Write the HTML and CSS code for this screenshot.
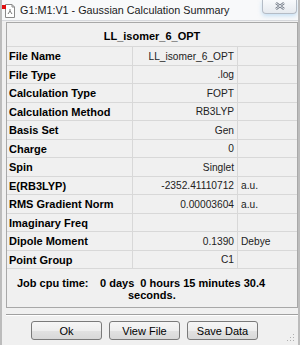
FILE: index.html
```html
<!DOCTYPE html>
<html lang="en">
<head>
    <meta charset="UTF-8">
    <meta name="viewport" content="width=device-width, initial-scale=1.0">
    <title>G1:M1:V1 - Gaussian Calculation Summary</title>
    <link rel="stylesheet" href="styles.css">
</head>
<body>
    <div class="window">
        <div class="titlebar">
            <svg class="app-icon" width="14" height="16" viewBox="0 0 14 16">
                <path d="M3.5 1.5 H10 L12.5 4 V14.5 H3.5 Z" fill="#fff" stroke="#8a8a8a"/>
                <path d="M10 1.5 V4 H12.5" fill="none" stroke="#8a8a8a"/>
                <path d="M6 11 L8 8 L10 11 M8 8 V6" fill="none" stroke="#777" stroke-width="1"/>
                <rect x="0" y="2" width="4" height="4" fill="#e01010"/>
            </svg>
            <span class="title">G1:M1:V1 - Gaussian Calculation Summary</span>
            <div class="close">
                <svg width="12" height="8" viewBox="0 0 12 8">
                    <path d="M2 1 L10 7 M10 1 L2 7" stroke="#6f7782" stroke-width="2.4"/>
                    <path d="M2 1 L10 7 M10 1 L2 7" stroke="#e9edf2" stroke-width="1"/>
                </svg>
            </div>
        </div>

        <div class="client">
            <div class="summary">
                <div class="grid">
                    <div class="head">LL_isomer_6_OPT</div>

                    <div class="label">File Name</div><div class="value">LL_isomer_6_OPT</div><div class="unit"></div>
                    <div class="label">File Type</div><div class="value">.log</div><div class="unit"></div>
                    <div class="label">Calculation Type</div><div class="value">FOPT</div><div class="unit"></div>
                    <div class="label">Calculation Method</div><div class="value">RB3LYP</div><div class="unit"></div>
                    <div class="label">Basis Set</div><div class="value">Gen</div><div class="unit"></div>
                    <div class="label">Charge</div><div class="value">0</div><div class="unit"></div>
                    <div class="label">Spin</div><div class="value">Singlet</div><div class="unit"></div>
                    <div class="label">E(RB3LYP)</div><div class="value">-2352.41110712</div><div class="unit">a.u.</div>
                    <div class="label">RMS Gradient Norm</div><div class="value">0.00003604</div><div class="unit">a.u.</div>
                    <div class="label">Imaginary Freq</div><div class="value"></div><div class="unit"></div>
                    <div class="label">Dipole Moment</div><div class="value">0.1390</div><div class="unit">Debye</div>
                    <div class="label">Point Group</div><div class="value">C1</div><div class="unit"></div>
                </div>

                <div class="cpu">
                    <span class="cpu-label">Job cpu time:</span>
                    <div class="cpu-value">
                        <span class="line">0 days &nbsp;0 hours 15 minutes 30.4</span>
                        <span class="line second">seconds.</span>
                    </div>
                </div>
            </div>

            <div class="separator"></div>

            <div class="buttons">
                <button>Ok</button>
                <button>View File</button>
                <button>Save Data</button>
            </div>
        </div>

        <div class="grip">
            <svg width="8" height="8" viewBox="0 0 8 8">
                <rect x="6" y="0" width="1" height="1" fill="#b0b0b0"/>
                <rect x="3" y="3" width="1" height="1" fill="#b0b0b0"/>
                <rect x="6" y="3" width="1" height="1" fill="#b0b0b0"/>
                <rect x="0" y="6" width="1" height="1" fill="#b0b0b0"/>
                <rect x="3" y="6" width="1" height="1" fill="#b0b0b0"/>
                <rect x="6" y="6" width="1" height="1" fill="#b0b0b0"/>
            </svg>
        </div>
    </div>
</body>
</html>
```

FILE: styles.css
```css
body {
    margin: 0;
    font-family: "Liberation Sans", Arial, sans-serif;
    background: #ffffff;
}
.window {
    position: relative;
    width: 300px;
    height: 345px;
    box-sizing: border-box;
    background: #f0f0f0;
    border-left: 2px solid #bcbcbc;
    border-right: 2px solid #bcbcbc;
    overflow: hidden;
}
.titlebar {
    display: flex;
    align-items: center;
    height: 21px;
    margin: 0 -2px;
    padding-left: 2px;
    background: #f8f9fa;
    border-bottom: 1px solid #d6d8dc;
    box-sizing: border-box;
}
.app-icon {
    margin-top: 2px;
    flex: none;
}
.title {
    margin-left: 4px;
    font-size: 10.8px;
    color: #1a1a1a;
    white-space: nowrap;
}
.close {
    position: absolute;
    top: 0;
    right: 1px;
    width: 35px;
    height: 14px;
    box-sizing: border-box;
    border: 1px solid #b4bcc6;
    border-top: none;
    border-radius: 0 0 4px 4px;
    background: linear-gradient(#f8fafc, #e6eaef);
    box-shadow: 0 2px 4px rgba(150, 200, 240, 0.5);
    display: flex;
    justify-content: center;
    padding-top: 2px;
}
.client {
    padding: 1px 1px 0 4px;
}
.summary {
    width: 292px;
    box-sizing: border-box;
    border: 1px solid #a8a8a8;
}
.grid {
    display: grid;
    grid-template-columns: 126px 105px 1fr;
    grid-template-rows: 24px repeat(12, 18.5px);
}
.grid > div {
    box-sizing: border-box;
    border-bottom: 1px solid #d8d8d8;
    display: flex;
    align-items: center;
    white-space: nowrap;
}
.head {
    grid-column: 1 / 4;
    justify-content: center;
    padding-top: 3px;
    font-weight: bold;
    font-size: 11px;
    color: #000;
}
.label {
    padding: 1px 0 0 2px;
    font-weight: bold;
    font-size: 11px;
    color: #000;
    border-right: 1px solid #d8d8d8;
}
.value {
    justify-content: flex-end;
    padding: 1px 3px 0 0;
    font-size: 10.2px;
    color: #222;
    border-right: 1px solid #d8d8d8;
}
.unit {
    padding: 1px 0 0 3px;
    font-size: 10.2px;
    color: #222;
}
.cpu {
    display: flex;
    height: 38px;
    box-sizing: border-box;
    padding: 8px 0 0 10px;
    font-weight: bold;
    font-size: 11px;
    color: #000;
}
.cpu-label {
    width: 83px;
    flex: none;
    line-height: 12px;
}
.cpu-value {
    display: flex;
    flex-direction: column;
    line-height: 12px;
}
.second {
    padding-left: 28px;
}
.separator {
    width: 292px;
    margin-top: 6px;
    border-top: 1px solid #a0a0a0;
    border-bottom: 1px solid #ffffff;
}
.buttons {
    display: flex;
    gap: 7px;
    padding: 5px 0 0 25px;
}
button {
    width: 71px;
    height: 19px;
    padding: 0;
    font-family: "Liberation Sans", Arial, sans-serif;
    font-size: 11px;
    color: #000;
    background: linear-gradient(#f6f6f6 0%, #eeeeee 50%, #e2e2e2 51%, #d8d8d8 100%);
    border: 1px solid #7a7a7a;
    border-radius: 3px;
}
.grip {
    position: absolute;
    right: 3px;
    bottom: 3px;
    width: 8px;
    height: 8px;
}
.grip svg {
    display: block;
}
```
